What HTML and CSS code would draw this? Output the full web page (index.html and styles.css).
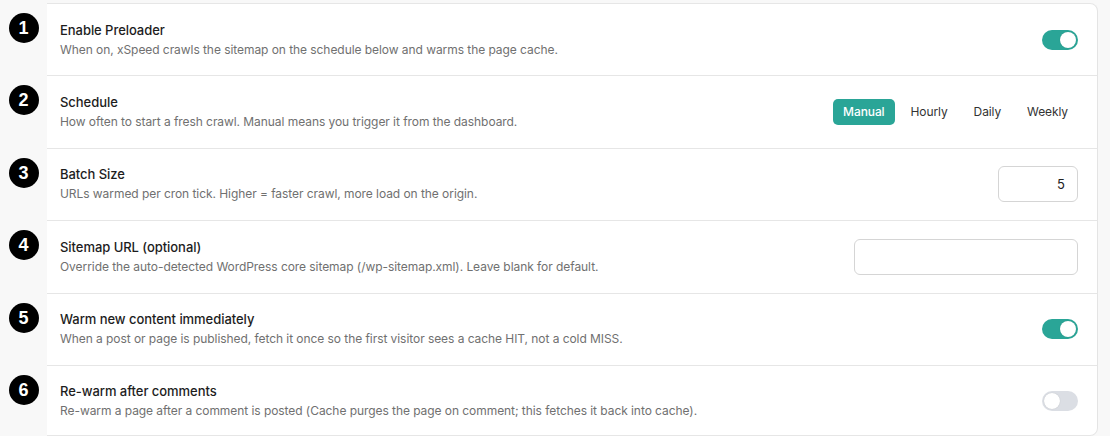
FILE: index.html
```html
<!DOCTYPE html>
<html>
<head>
<meta charset="utf-8">
<link rel="stylesheet" href="styles.css">
</head>
<body>
<div class="list">
  <div class="row first">
    <div class="marker"><span class="num">1</span></div>
    <div class="body">
      <div class="text">
        <div class="title">Enable Preloader</div>
        <div class="desc">When on, xSpeed crawls the sitemap on the schedule below and warms the page cache.</div>
      </div>
      <span class="toggle on"><span class="knob"></span></span>
    </div>
  </div>
  <div class="row">
    <div class="marker"><span class="num">2</span></div>
    <div class="body">
      <div class="text">
        <div class="title">Schedule</div>
        <div class="desc">How often to start a fresh crawl. Manual means you trigger it from the dashboard.</div>
      </div>
      <div class="seg">
        <span class="seg-btn active">Manual</span>
        <span class="seg-btn">Hourly</span>
        <span class="seg-btn">Daily</span>
        <span class="seg-btn">Weekly</span>
      </div>
    </div>
  </div>
  <div class="row">
    <div class="marker"><span class="num">3</span></div>
    <div class="body">
      <div class="text">
        <div class="title">Batch Size</div>
        <div class="desc">URLs warmed per cron tick. Higher = faster crawl, more load on the origin.</div>
      </div>
      <div class="input num-input">5</div>
    </div>
  </div>
  <div class="row">
    <div class="marker"><span class="num">4</span></div>
    <div class="body">
      <div class="text">
        <div class="title">Sitemap URL (optional)</div>
        <div class="desc">Override the auto-detected WordPress core sitemap (/wp-sitemap.xml). Leave blank for default.</div>
      </div>
      <div class="input url-input"></div>
    </div>
  </div>
  <div class="row">
    <div class="marker"><span class="num">5</span></div>
    <div class="body">
      <div class="text">
        <div class="title">Warm new content immediately</div>
        <div class="desc">When a post or page is published, fetch it once so the first visitor sees a cache HIT, not a cold MISS.</div>
      </div>
      <span class="toggle on"><span class="knob"></span></span>
    </div>
  </div>
  <div class="row last">
    <div class="marker"><span class="num">6</span></div>
    <div class="body">
      <div class="text">
        <div class="title">Re-warm after comments</div>
        <div class="desc">Re-warm a page after a comment is posted (Cache purges the page on comment; this fetches it back into cache).</div>
      </div>
      <span class="toggle"><span class="knob"></span></span>
    </div>
  </div>
</div>
</body>
</html>
```
FILE: styles.css
```css
* { box-sizing: border-box; }
html, body { margin: 0; padding: 0; }
body {
  background: #f8f8f8;
  font-family: "Inter", "Liberation Sans", sans-serif;
  color: #1f1f1f;
  height: 436px;
  overflow: hidden;
}
.list {
  padding-top: 3px;
  margin-right: 12px;
}
.row {
  display: flex;
}
.marker {
  width: 47px;
  flex: none;
  display: flex;
  justify-content: center;
  align-items: flex-start;
  padding-top: 9px;
}
.row.first .marker { padding-top: 10px; }
.num {
  width: 30px;
  height: 30px;
  border-radius: 50%;
  background: #000;
  color: #fff;
  font-family: "Liberation Sans", "Inter", sans-serif;
  font-weight: 700;
  font-size: 18px;
  line-height: 30px;
  text-align: center;
}
.body {
  flex: 1;
  display: flex;
  align-items: center;
  justify-content: space-between;
  background: #fff;
  border-right: 1px solid #e4e4e4;
  border-bottom: 1px solid #e6e6e6;
  height: 72.5px;
  padding: 0 19px 0 13px;
}
.row.first .body {
  border-top: 1px solid #e6e6e6;
  border-top-right-radius: 8px;
  height: 73px;
}
.row.last .body {
  height: 70px;
  border-bottom-right-radius: 8px;
}
.title {
  font-size: 13px;
  font-weight: 500;
  line-height: 18px;
  color: #1d1d1d;
  letter-spacing: -0.05px;
}
.desc {
  font-size: 12px;
  line-height: 18px;
  margin-top: 2px;
  color: #707070;
  letter-spacing: -0.06px;
}
.toggle {
  width: 36px;
  height: 20px;
  border-radius: 10px;
  background: #dbdee4;
  display: flex;
  align-items: center;
  padding: 0 2px;
  flex: none;
}
.toggle.on {
  background: #2aa597;
  justify-content: flex-end;
}
.knob {
  width: 16px;
  height: 16px;
  border-radius: 50%;
  background: #fff;
  box-shadow: 0 0 1px rgba(0,0,0,0.2);
}
.seg {
  display: flex;
  gap: 6px;
}
.seg-btn {
  height: 26px;
  line-height: 26px;
  padding: 0 10px;
  font-size: 12px;
  border-radius: 5px;
  color: #333;
  letter-spacing: -0.1px;
}
.seg-btn.active {
  background: #2aa597;
  color: #fff;
  font-weight: 500;
}
.input {
  border: 1px solid #d5d5d5;
  border-radius: 6px;
  background: #fff;
  font-size: 13px;
  color: #222;
}
.num-input {
  width: 80px;
  height: 36px;
  line-height: 34px;
  text-align: right;
  padding-right: 12px;
}
.url-input {
  width: 224px;
  height: 36px;
}
```
